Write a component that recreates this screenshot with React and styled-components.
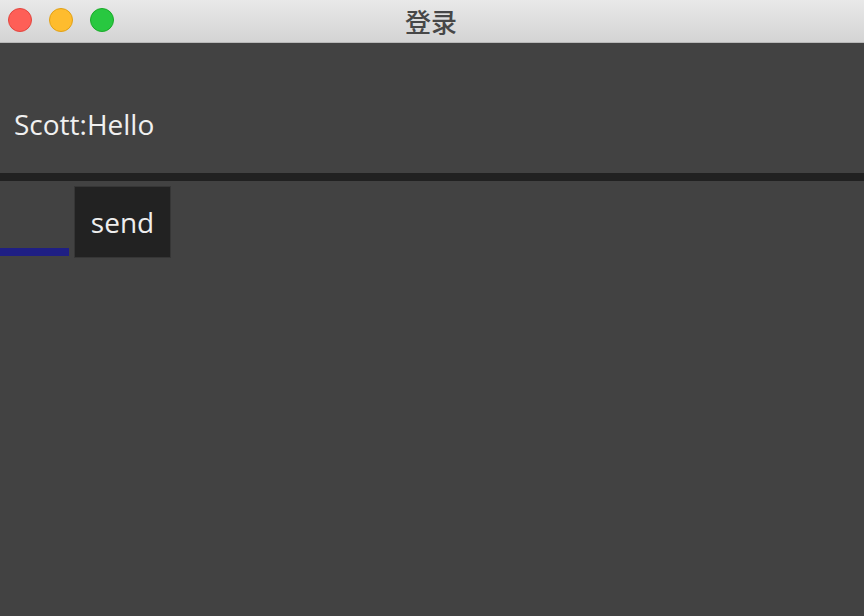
import React from 'react';
import styled, { createGlobalStyle } from 'styled-components';

const GlobalStyle = createGlobalStyle`
	html, body {
		margin: 0;
		padding: 0;
		background: #424242;
	}
	body {
		font-family: 'Open Sans', 'Noto Sans', 'Noto Sans CJK SC', sans-serif;
	}
`;

function App() {
	return (
		<Window>
			<GlobalStyle />
			<TitleBar>
				<Lights>
					<Light color="#fe5f57" edge="#e2463f" />
					<Light color="#febc2e" edge="#e1a116" />
					<Light color="#28c840" edge="#1aab29" />
				</Lights>
				<Title>登录</Title>
			</TitleBar>
			<Messages>
				<Message>Scott:Hello</Message>
			</Messages>
			<Divider />
			<InputRow>
				<InputLine />
				<SendButton>send</SendButton>
			</InputRow>
		</Window>
	);
}

export default App;

const Window = styled.div`
	width: 864px;
	height: 616px;
	display: flex;
	flex-direction: column;
	background: #424242;
	overflow: hidden;
`;

const TitleBar = styled.div`
	position: relative;
	height: 42px;
	flex-shrink: 0;
	display: flex;
	align-items: center;
	justify-content: center;
	background: linear-gradient(#e9e9e9, #d4d4d4);
	border-bottom: 1px solid #b8b8b8;
`;

const Lights = styled.div`
	position: absolute;
	left: 8px;
	top: 8px;
	display: flex;
	gap: 17px;
`;

const Light = styled.div`
	width: 24px;
	height: 24px;
	border-radius: 50%;
	box-sizing: border-box;
	background: ${(props) => props.color};
	border: 1px solid ${(props) => props.edge};
`;

const Title = styled.div`
	font-family: 'Noto Sans CJK SC', sans-serif;
	font-size: 26px;
	font-weight: 500;
	color: #474747;
	line-height: 1;
	margin-left: -2px;
`;

const Messages = styled.div`
	height: 130px;
	flex-shrink: 0;
	display: flex;
	align-items: center;
	padding-left: 14px;
`;

const Message = styled.div`
	font-size: 28px;
	color: #f0f0f0;
	margin-top: 32px;
`;

const Divider = styled.div`
	height: 8px;
	flex-shrink: 0;
	background: #212121;
`;

const InputRow = styled.div`
	display: flex;
	align-items: flex-end;
	gap: 5px;
	padding-top: 5px;
`;

const InputLine = styled.div`
	width: 69px;
	height: 8px;
	margin-bottom: 2px;
	background: #1f1f84;
`;

const SendButton = styled.div`
	width: 97px;
	height: 72px;
	box-sizing: border-box;
	display: flex;
	align-items: center;
	justify-content: center;
	background: #222222;
	border: 1px solid #363636;
	font-size: 28px;
	color: #eeeeee;
`;
